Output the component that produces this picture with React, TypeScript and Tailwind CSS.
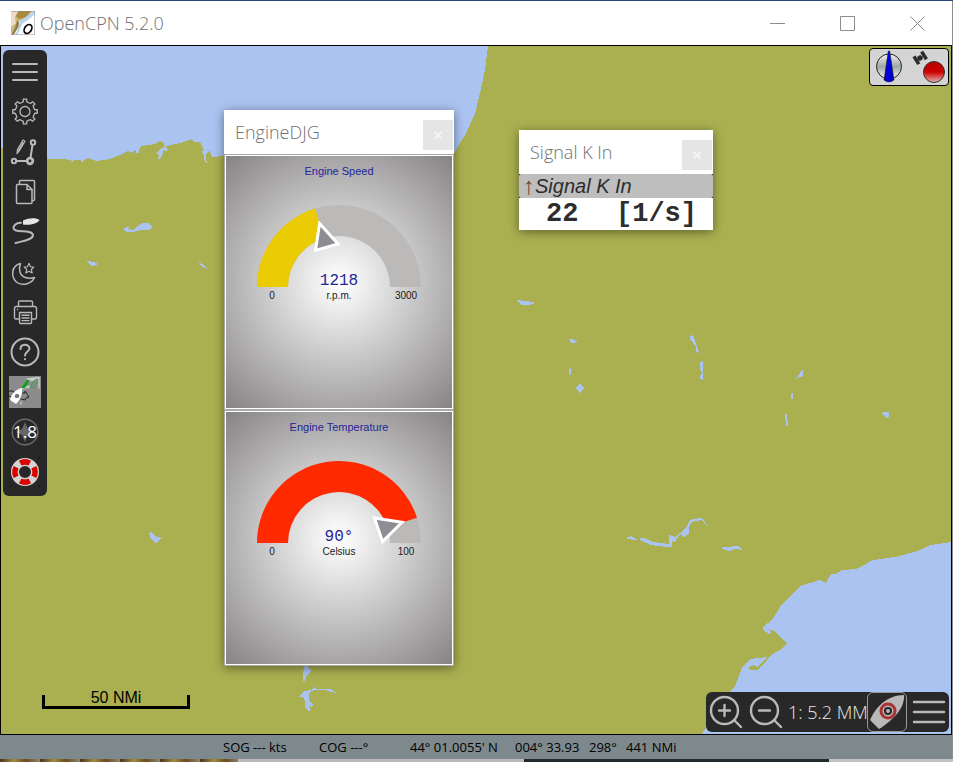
import type { ReactNode } from "react";

const SEA = "#abc3f0";
const ICON = "#b9b9b9";

function Chart() {
  return (
    <svg
      className="absolute inset-0 h-full w-full"
      viewBox="1 46 950 688"
      preserveAspectRatio="xMidYMid slice"
      shapeRendering="crispEdges"
      fill={SEA}
      aria-hidden="true"
    >
      <rect x="0" y="40" width="960" height="700" fill="#aab050" />
      <path d="M0 46H488L485 70L483 80L475 114L465 135L454 153L400 190H240V155L224 156L212 157L209 148V152L206 154V160L208 163L205 162L203 153L201 152L204 149L200 146L203 147H209L203 147L200 142H194L192 139L187 141L180 143L170 145L165 147L168 149L166 152L164 150L161 158L158 159L159 156L156 153L158 151L165 146L164 143L160 141L155 144L141 146L139 150V153H136V150L130 153L128 151L120 155L110 159L96 161L88 158L84 160L82 163L81 160L74 160L72 162L70 160L63 159H47L3 148H0Z" />
      <path d="M952 542L930 545L918 551L895 557L873 560L862 566L856 569L842 570L836 574H831L826 583L820 580L800 586L782 604L772 620L763 627V630L769 634L772 632L768 629L775 631L783 640L787 643L785 646L780 650L771 655L764 664L757 670H750L749 667L754 665L757 667L762 663L767 657L750 659L742 668L735 686L730 692L720 712L706 728L701 735H952Z" />
      <path d="M123 229L130 226L128 229L133 230L138 226L143 223H148L152 227L149 230H141L133 232H126Z" />
      <path d="M87 261L94 262L98 264L94 266H91Z" />
      <path d="M199 262L204 265L207 269L201 266Z" />
      <path d="M149 533L151 531L156 537L163 538L158 541L156 543L151 539Z" />
      <path d="M516 300L526 301L536 303L529 305H521Z" />
      <path d="M569 339L572 339L578 342L571 343Z" />
      <path d="M571 367V376L569 374V369Z" />
      <path d="M580 384L584 388L581 393L576 389L577 386Z" />
      <path d="M690 336L693 335L696 343L699 353L696 352V347L690 339Z" />
      <path d="M700 362L703 361V380L700 379V376L702 373L700 369Z" />
      <path d="M803 369V376L796 379L800 373Z" />
      <path d="M793 392V399H791V394Z" />
      <path d="M785 414L787 414L788 426H786Z" />
      <path d="M883 412H889V416L887 418L882 414Z" />
      <path d="M625 538L631 536L638 540H633Z" />
      <path d="M640 538H645L653 542L669 544V535L675 537L680 533L686 528L690 520L699 518H702L708 526L701 520L692 522L689 527V534L684 537L680 534L674 543L672 540V547H667L651 545L640 540Z" />
      <path d="M722 547L730 547L733 546H738L742 550L735 549L729 551L722 549Z" />
      <path d="M305 664L308 666L311 671L307 675L305 681H303V674Z" />
      <path d="M298 697L304 691L311 690L314 687L317 689H330L337 693L331 692L325 690H314L309 693V700L313 705L311 707L309 704L311 710L308 711L305 708V701L303 697Z" />
    </svg>
  );
}

const gearPoints = Array.from({ length: 8 }, (_, i) =>
  [
    [-17, 9.6],
    [-10, 10],
    [-8, 12.4],
    [8, 12.4],
    [10, 10],
    [17, 9.6],
  ]
    .map(([offset, radius]) => {
      const angle = ((i * 45 + offset) * Math.PI) / 180;
      return `${(20 + radius * Math.sin(angle)).toFixed(2)},${(19.5 - radius * Math.cos(angle)).toFixed(2)}`;
    })
    .join(" "),
).join(" ");

function Icon({ children }: { children: ReactNode }) {
  return (
    <svg
      className="h-10 w-10"
      viewBox="0 0 40 40"
      fill="none"
      stroke={ICON}
      strokeWidth="1.5"
      strokeLinecap="round"
      strokeLinejoin="round"
      aria-hidden="true"
    >
      {children}
    </svg>
  );
}

const tools: { label: string; icon: ReactNode }[] = [
  { label: "Hide toolbar", icon: <path strokeWidth="2" d="M8 12H32M8 20H32M8 28H32" /> },
  {
    label: "Options",
    icon: (
      <>
        <polygon points={gearPoints} strokeWidth="1.3" />
        <circle cx="20" cy="19.5" r="5" strokeWidth="1.3" />
      </>
    ),
  },
  {
    label: "Create route",
    icon: (
      <>
        <path strokeWidth="2" d="M27.5 13L25.5 25.5M12 29H21" />
        <circle cx="28" cy="10.5" r="2.2" strokeWidth="2" />
        <circle cx="9" cy="29" r="2.2" strokeWidth="2" />
        <circle cx="25" cy="29" r="2.8" strokeWidth="2.8" />
        <path strokeWidth="1.2" d="M18 8L20 9.2L14.5 18.5L12 21.5L12.5 17.5ZM16.8 10.2L18.8 11.4M17.3 12L13.5 18.5" />
      </>
    ),
  },
  {
    label: "Route and mark manager",
    icon: (
      <>
        <path d="M11.5 13.5a1 1 0 0 1 1-1H22L27 17.5V30.5a1 1 0 0 1-1 1H12.5a1 1 0 0 1-1-1Z" />
        <path d="M22 12.5V17.5H27M14.5 12V9.5a1 1 0 0 1 1-1H28.5a1 1 0 0 1 1 1V27.5a1 1 0 0 1-1 1H27.5" />
      </>
    ),
  },
  {
    label: "Enable tracking",
    icon: (
      <>
        <path strokeWidth="2" d="M16 10.8C9 11 6 17 11 18.5C16 20 27 18 28 23C28 28 18 29 10.5 31" />
        <path fill="#e6e6e6" stroke="none" d="M18 8.5C24 6 31 5.5 34.5 8C33 11.5 25 13.5 18 12.5Z" />
      </>
    ),
  },
  {
    label: "Change color scheme",
    icon: (
      <>
        <path d="M15.5 11.5C6 14 5.5 25 12 30.5C18 34.5 27 31.5 29.5 25.5C23 27.5 16.5 25.5 15 20C14 17 14.5 14 15.5 11.5Z" />
        <path
          strokeWidth="1.1"
          d="M24 11.2L25.5 14.7L28.8 15L26.3 17.5L27.2 21L24 19.2L20.8 21L21.7 17.5L19.2 15L22.5 14.7Z"
        />
      </>
    ),
  },
  {
    label: "Print chart",
    icon: (
      <path
        strokeWidth="1.4"
        d="M13.5 14.5V10a1 1 0 0 1 1-1H26.5a1 1 0 0 1 1 1V14.5M14 27H11a1.5 1.5 0 0 1-1.5-1.5V16.5a2 2 0 0 1 2-2H29.5a2 2 0 0 1 2 2V25.5a1.5 1.5 0 0 1-1.5 1.5H27M14.5 20.5H26.5V30.5a1 1 0 0 1-1 1H15.5a1 1 0 0 1-1-1ZM17 23.3H24M17 26H24M17 28.6H24M12.5 17.5V17.6"
      />
    ),
  },
  {
    label: "Help",
    icon: (
      <>
        <circle cx="20" cy="20" r="13.5" strokeWidth="2" />
        <path strokeWidth="2" d="M15.5 17C15.5 11.5 24.5 11.5 24.5 16.5C24.5 19.5 20 19.5 20 23.5M20 27V27.3" />
      </>
    ),
  },
  {
    label: "AIS targets",
    icon: (
      <>
        <rect x="4" y="4" width="32" height="32" fill="#8b8b8b" stroke="none" />
        <path fill="#c4c4c4" stroke="none" d="M23 7L34 5L32 8L23 10ZM17 15L26 13L26 16L16 17Z" />
        <path fill="#0fa01a" stroke="none" d="M16 16L22 8H25L20 16Z" />
        <path stroke="#3f9a48" strokeWidth="1" d="M25 15L31 7L34 7L29 15Z" />
        <path stroke="#d8d8d8" strokeWidth="1.2" d="M22 7L34 5.5V16M16 30L16 32" />
        <path stroke="#222" strokeWidth="1" d="M4 19L8 19L10 22M17 21H20V19L24 25L21 26L20 28L16 27M4 24L7 25L5 28" />
        <path fill="#fff" stroke="none" d="M17 16C18 22 15 28 11 32L5 28C6 22 11 17 17 16Z" />
        <circle cx="12" cy="24" r="1.8" fill="#777" stroke="#444" strokeWidth="0.6" />
      </>
    ),
  },
  {
    label: "Magnetic variation",
    icon: (
      <>
        <circle cx="20" cy="20" r="12.8" stroke="#6c6c6c" strokeWidth="1.4" />
        <path fill="#666" stroke="none" d="M20 10L23 17L29 20L23 23L20 30L17 23L11 20L17 17Z" />
        <text
          x="20"
          y="26"
          textAnchor="middle"
          fill="#fff"
          stroke="none"
          className="font-['Open_Sans',sans-serif] text-[17px]"
        >
          1.8
        </text>
      </>
    ),
  },
  {
    label: "Man overboard",
    icon: (
      <>
        <circle cx="20" cy="20" r="10" stroke="#d4d4d4" strokeWidth="8" />
        <path
          stroke="#d90000"
          strokeWidth="5.5"
          strokeLinecap="butt"
          d="M15.2 11.2A10 10 0 0 1 24.8 11.2M28.8 15.2A10 10 0 0 1 28.8 24.8M24.8 28.8A10 10 0 0 1 15.2 28.8M11.2 24.8A10 10 0 0 1 11.2 15.2"
        />
        <path stroke="#111" strokeWidth="1" d="M5 5L7 7M35 5L33 7M5 35L7 33M35 35L33 33" />
      </>
    ),
  },
];

function Gauge(props: {
  title: string;
  value: number;
  max: number;
  display: string;
  unit: string;
  color: string;
  pointer: string;
}) {
  const angle = Math.PI * (1 - props.value / props.max);
  const px = (r: number) => 113 + r * Math.cos(angle);
  const py = (r: number) => 131 - r * Math.sin(angle);
  return (
    <section className="flex flex-col items-center border border-white bg-[radial-gradient(circle_farthest-corner_at_center,#ffffff_0%,#f4f4f4_10%,#868385_100%)] font-['Liberation_Sans',Arial,sans-serif]">
      <h2 className="mt-[7px] h-4 text-[11px] leading-4 text-[#1f2698]">{props.title}</h2>
      <svg className="-mt-[23px] h-[252px] w-full" viewBox="0 0 226 252">
        <path fill="#bcbab8" d="M31 131A82 82 0 0 1 195 131H164A51 51 0 0 0 62 131Z" />
        <path
          fill={props.color}
          d={`M31 131A82 82 0 0 1 ${px(82)} ${py(82)}L${px(51)} ${py(51)}A51 51 0 0 0 62 131Z`}
        />
        <polygon points={props.pointer} fill="#8f8d94" stroke="#fff" strokeWidth="3" />
        <g fill="#202020" textAnchor="middle" className="text-[10px]">
          <text x="46" y="143">0</text>
          <text x="113" y="143">{props.unit}</text>
          <text x="180" y="143">{props.max}</text>
        </g>
        <text
          x="113"
          y="129"
          fill="#1f2698"
          textAnchor="middle"
          className="font-['Liberation_Mono',monospace] text-[16px]"
        >
          {props.display}
        </text>
      </svg>
    </section>
  );
}

function PanelTitle({ children }: { children: string }) {
  return (
    <header className="flex h-11 items-start justify-between bg-white pr-px pl-[11px]">
      <h1 className="text-[18px] leading-11 font-light text-[#707070]">{children}</h1>
      <button
        type="button"
        aria-label={`Close ${children}`}
        className="mt-[10px] flex h-[30px] w-[30px] items-center justify-center bg-[#e5e5e5]"
      >
        <svg className="h-2 w-2" viewBox="0 0 8 8" stroke="#f4f4f4" strokeWidth="2" aria-hidden="true">
          <path d="M0.5 1L7.5 7.5M7.5 1L0.5 7.5" />
        </svg>
      </button>
    </header>
  );
}

function TitleBar() {
  const controls = [
    { label: "Minimize", d: "M0 7.5H15" },
    { label: "Maximize", d: "M0.5 0.5H14.5V14.5H0.5Z" },
    { label: "Close", d: "M0.5 0.5L14.5 14.5M14.5 0.5L0.5 14.5" },
  ];
  return (
    <header className="flex h-11 shrink-0 items-center bg-white">
      <svg className="ml-[11px] h-6 w-6" viewBox="0 0 24 24" aria-hidden="true">
        <rect width="24" height="24" fill="#fff" />
        <path fill="#c9b57d" d="M0 0H22L18 4L12 9L8 10L9 15L5 20L3 24H0Z" />
        <path fill="#a8873f" d="M8 0H20L15 6L8 8L5 5Z" />
        <path fill="#ecdcc8" d="M0 0H7L4 6L5 12L0 16Z" />
        <path fill="#8d7a50" d="M6 10L8 11L7 16L3 23H1L4 17Z" />
        <path fill="#b9d5ef" d="M22 0H24V3L17 9L11 13L9 19L6 24H4L8 16L9 10L15 6Z" />
        <path stroke="#8a8a8a" fill="none" d="M0 0.5H24M23.5 0V24M0 23.5H24" opacity="0.5" />
        <ellipse cx="17" cy="18" rx="3.4" ry="4.8" transform="rotate(35 17 18)" fill="none" stroke="#000" strokeWidth="1.7" />
      </svg>
      <h1 className="ml-[5px] text-[18px] font-light text-[#707070]">OpenCPN 5.2.0</h1>
      <div className="ml-auto flex h-full">
        {controls.map((c) => (
          <button key={c.label} type="button" aria-label={c.label} className="flex w-[70px] items-center justify-center">
            <svg className="h-[15px] w-[15px]" viewBox="0 0 15 15" fill="none" stroke="#8c8c8c" aria-hidden="true">
              <path d={c.d} />
            </svg>
          </button>
        ))}
      </div>
    </header>
  );
}

function GpsStatus() {
  return (
    <div className="absolute top-[2px] right-[2px] rounded border border-black bg-[#d4d4d4]">
      <svg className="h-9 w-[78px]" viewBox="870 49 78 36" role="img" aria-label="Compass and GPS status">
        <defs>
          <linearGradient id="dial" x2="0" y2="1">
            <stop offset="0" stopColor="#f4f4f4" />
            <stop offset="0.5" stopColor="#a0a7a0" />
            <stop offset="1" stopColor="#f4f4f4" />
          </linearGradient>
          <linearGradient id="lamp" x2="0" y2="1">
            <stop offset="0" stopColor="#b80000" />
            <stop offset="0.5" stopColor="#cc0000" />
            <stop offset="1" stopColor="#e8b4b4" />
          </linearGradient>
          <linearGradient id="needle">
            <stop offset="0" stopColor="#0000a0" />
            <stop offset="0.5" stopColor="#0000f0" />
            <stop offset="1" stopColor="#000080" />
          </linearGradient>
        </defs>
        <circle cx="889" cy="66.5" r="12.5" fill="url(#dial)" stroke="#222" />
        <path d="M888.3 51H889.7L894 80Q889 84 884 80Z" fill="url(#needle)" stroke="#223" strokeWidth="0.6" />
        <g fill="#2b2b2b" transform="rotate(-32 920 58)">
          <rect x="914" y="53.5" width="3.5" height="9" />
          <rect x="923" y="53.5" width="3.5" height="9" />
          <rect x="917" y="57" width="6" height="2" />
          <rect x="918" y="55.5" width="4" height="5" />
        </g>
        <circle cx="934" cy="72" r="10.5" fill="url(#lamp)" stroke="#333" />
      </svg>
    </div>
  );
}

function CanvasBar() {
  return (
    <nav
      aria-label="Canvas controls"
      className="absolute right-[2px] bottom-[2px] flex h-10 items-center rounded-md bg-[#282828] pr-[2px]"
    >
      <button type="button" aria-label="Zoom in">
        <Icon>
          <g strokeWidth="2.4">
            <circle cx="18.5" cy="18.5" r="13.5" />
            <path d="M18.5 13V24M13 18.5H24M28.5 28.5L35 35" />
          </g>
        </Icon>
      </button>
      <button type="button" aria-label="Zoom out">
        <Icon>
          <g strokeWidth="2.4">
            <circle cx="18.5" cy="18.5" r="13.5" />
            <path d="M13 18.5H24M28.5 28.5L35 35" />
          </g>
        </Icon>
      </button>
      <span className="w-[81px] pl-[2px] text-[18px] font-light whitespace-nowrap text-[#e8e8e8]">1: 5.2 MM</span>
      <button type="button" aria-label="Follow own ship" className="rounded-md border border-[#999]">
        <svg className="h-[38px] w-[38px]" viewBox="868 693 38 38" aria-hidden="true">
          <path fill="#b9b9b9" d="M870 720L879 729C890 722 905 710 904 695C888 695 876 706 870 720Z" />
          <circle cx="888" cy="711" r="7" fill="#b9b9b9" stroke="#a83232" strokeWidth="3" />
          <circle cx="888" cy="711" r="3" fill="#b9b9b9" stroke="#282828" strokeWidth="2.2" />
        </svg>
      </button>
      <button type="button" aria-label="Canvas options">
        <Icon>
          <path strokeWidth="2.4" d="M7 10H37M7 20H37M7 30H37" />
        </Icon>
      </button>
    </nav>
  );
}

export default function App() {
  return (
    <div className="flex h-screen flex-col overflow-hidden bg-[#2b4478] pt-px font-['Open_Sans','Noto_Sans',sans-serif]">
      <div className="flex min-h-0 grow flex-col border-r border-[#8d8d92]">
        <TitleBar />
        <main className="relative min-h-0 grow overflow-hidden border border-black">
          <Chart />

          <nav
            aria-label="Main toolbar"
            className="absolute top-1 left-[2px] flex flex-col rounded-md bg-[#282828] px-[2px] pt-[2px] pb-1"
          >
            {tools.map((t) => (
              <button key={t.label} type="button" aria-label={t.label}>
                <Icon>{t.icon}</Icon>
              </button>
            ))}
          </nav>

          <GpsStatus />

          <article className="absolute top-16 left-[223px] w-[230px] shadow-[0_2px_10px_rgba(0,0,0,0.45)]">
            <PanelTitle>EngineDJG</PanelTitle>
            <div className="flex flex-col gap-[2px] bg-[#a9a9ad] p-px">
              <Gauge
                title="Engine Speed"
                value={1218}
                max={3000}
                display="1218"
                unit="r.p.m."
                color="#eacb04"
                pointer="93.6,67.5 112,88 89.5,94.5"
              />
              <Gauge
                title="Engine Temperature"
                value={90}
                max={100}
                display="90°"
                unit="Celsius"
                color="#ff2a00"
                pointer="148.5,106 176,110.3 156.5,129.5"
              />
            </div>
          </article>

          <article className="absolute top-[84px] left-[518px] w-[194px] bg-white shadow-[0_2px_10px_rgba(0,0,0,0.45)]">
            <PanelTitle>Signal K In</PanelTitle>
            <div className="bg-black">
              <h2 className="flex h-6 rounded-[2px] bg-[#bebebe] pl-1 font-['Liberation_Sans',Arial,sans-serif] text-[20px] leading-6 text-[#2d2d2d]">
                <span className="w-3 text-[24px] text-[#6b4a2c]">↑</span>
                <i>Signal K In</i>
              </h2>
            </div>
            <p className="flex h-8 justify-between pr-4 pl-[27px] font-['Liberation_Mono',monospace] text-[27px] leading-8 font-bold text-[#2d2d2d]">
              <span>22</span>
              <span>[1/s]</span>
            </p>
          </article>

          <div className="absolute bottom-[25px] left-[41px] w-[148px] border-x-[3px] border-b-[3px] border-black">
            <p className="-mt-[5px] h-4 text-center font-['Liberation_Sans',Arial,sans-serif] text-[16px] leading-4 text-black">
              50 NMi
            </p>
          </div>

          <CanvasBar />
        </main>
        <footer className="flex h-6 shrink-0 bg-[#7d898d] pl-[223px] text-[13px] leading-6 whitespace-pre text-black">
          <span className="w-24">SOG --- kts</span>
          <span className="w-[91px]">COG ---°</span>
          <span className="w-[105px]">44° 01.0055' N</span>
          <span className="w-[74px]">004° 33.93</span>
          <span className="w-[37px]">298°</span>
          <span>441 NMi</span>
        </footer>
      </div>
      <div className="flex h-[3px] shrink-0">
        <div className="w-1/4 bg-[repeating-linear-gradient(90deg,#4a3418_0px,#a08a40_14px,#6b4a20_26px,#8a8a70_40px)]" />
        <div className="w-3/10 bg-[#bdb8b8]" />
        <div className="w-[32%] bg-[#22292d]" />
        <div className="grow bg-[#c2c2c2]" />
      </div>
    </div>
  );
}
